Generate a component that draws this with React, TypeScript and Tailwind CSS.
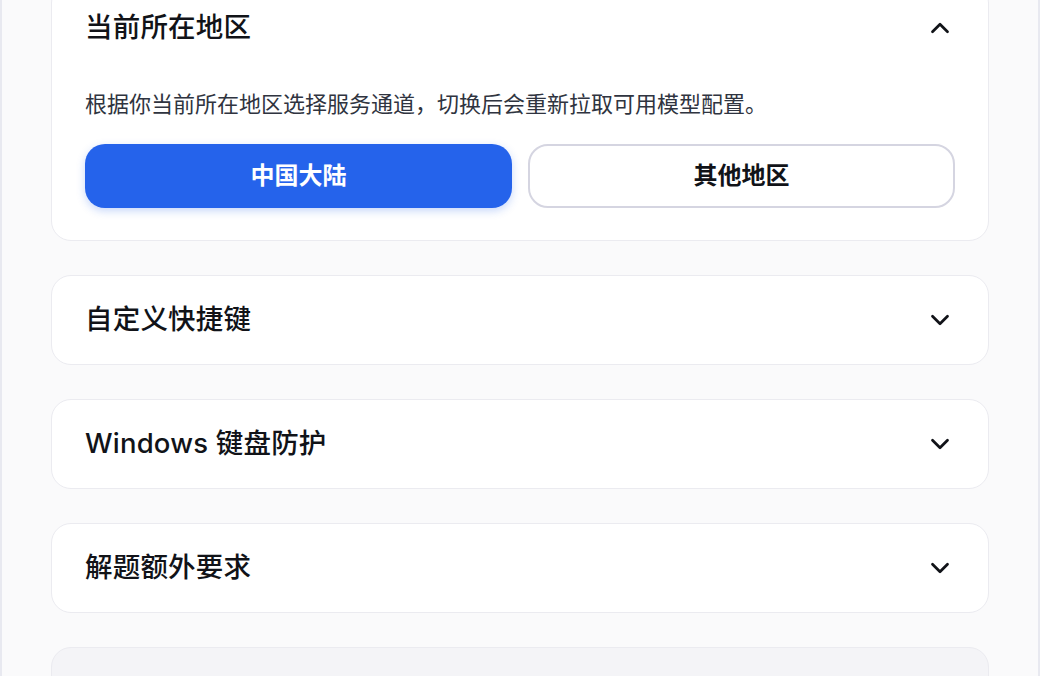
import React, { useState } from 'react';
import { ChevronDown, ChevronUp } from 'lucide-react';

const font = { fontFamily: '"Inter", "Noto Sans CJK SC", sans-serif' };

function Section({ title, open, children }: { title: string; open?: boolean; children?: React.ReactNode }) {
  return (
    <div className="rounded-[20px] border border-[#ebebf0] bg-white">
      <div className="h-[88px] px-[33px] flex items-center justify-between">
        <span className="text-[27.5px] font-medium text-[#111318] tracking-[0.2px]">{title}</span>
        {open ? (
          <ChevronUp className="w-[30px] h-[30px] text-[#111318]" strokeWidth={2.2} />
        ) : (
          <ChevronDown className="w-[30px] h-[30px] text-[#111318]" strokeWidth={2.2} />
        )}
      </div>
      {open && children}
    </div>
  );
}

export default function App() {
  const [region, setRegion] = useState('cn');

  return (
    <div
      className="h-screen overflow-hidden bg-[#fafafb] border-l-2 border-r-2 border-[#e8e9f0] px-[49px]"
      style={font}
    >
      <div className="-mt-[17px] flex flex-col gap-[34px]">
        {/* Region */}
        <Section title="当前所在地区" open>
          <div className="px-[33px] pb-[32px]">
            <p className="pt-[16px] text-[22px] leading-[32px] text-[#2f3440]">
              根据你当前所在地区选择服务通道，切换后会重新拉取可用模型配置。
            </p>
            <div className="mt-[24px] grid grid-cols-2 gap-[16px]">
              <button
                onClick={() => setRegion('cn')}
                className={
                  region === 'cn'
                    ? 'h-[64px] rounded-[20px] bg-[#2563eb] text-white text-[24px] font-bold shadow-[0_3px_8px_rgba(37,99,235,0.25)]'
                    : 'h-[64px] rounded-[20px] border-2 border-[#d5d5e1] bg-white text-[#111318] text-[24px] font-bold'
                }
              >
                中国大陆
              </button>
              <button
                onClick={() => setRegion('other')}
                className={
                  region === 'other'
                    ? 'h-[64px] rounded-[20px] bg-[#2563eb] text-white text-[24px] font-bold shadow-[0_3px_8px_rgba(37,99,235,0.25)]'
                    : 'h-[64px] rounded-[20px] border-2 border-[#d5d5e1] bg-white text-[#111318] text-[24px] font-bold'
                }
              >
                其他地区
              </button>
            </div>
          </div>
        </Section>

        <Section title="自定义快捷键" />
        <Section title="Windows 键盘防护" />
        <Section title="解题额外要求" />

        {/* Next, partially visible */}
        <div className="h-[90px] rounded-[20px] border border-[#ebebf0] bg-[#f4f4f7]" />
      </div>
    </div>
  );
}
